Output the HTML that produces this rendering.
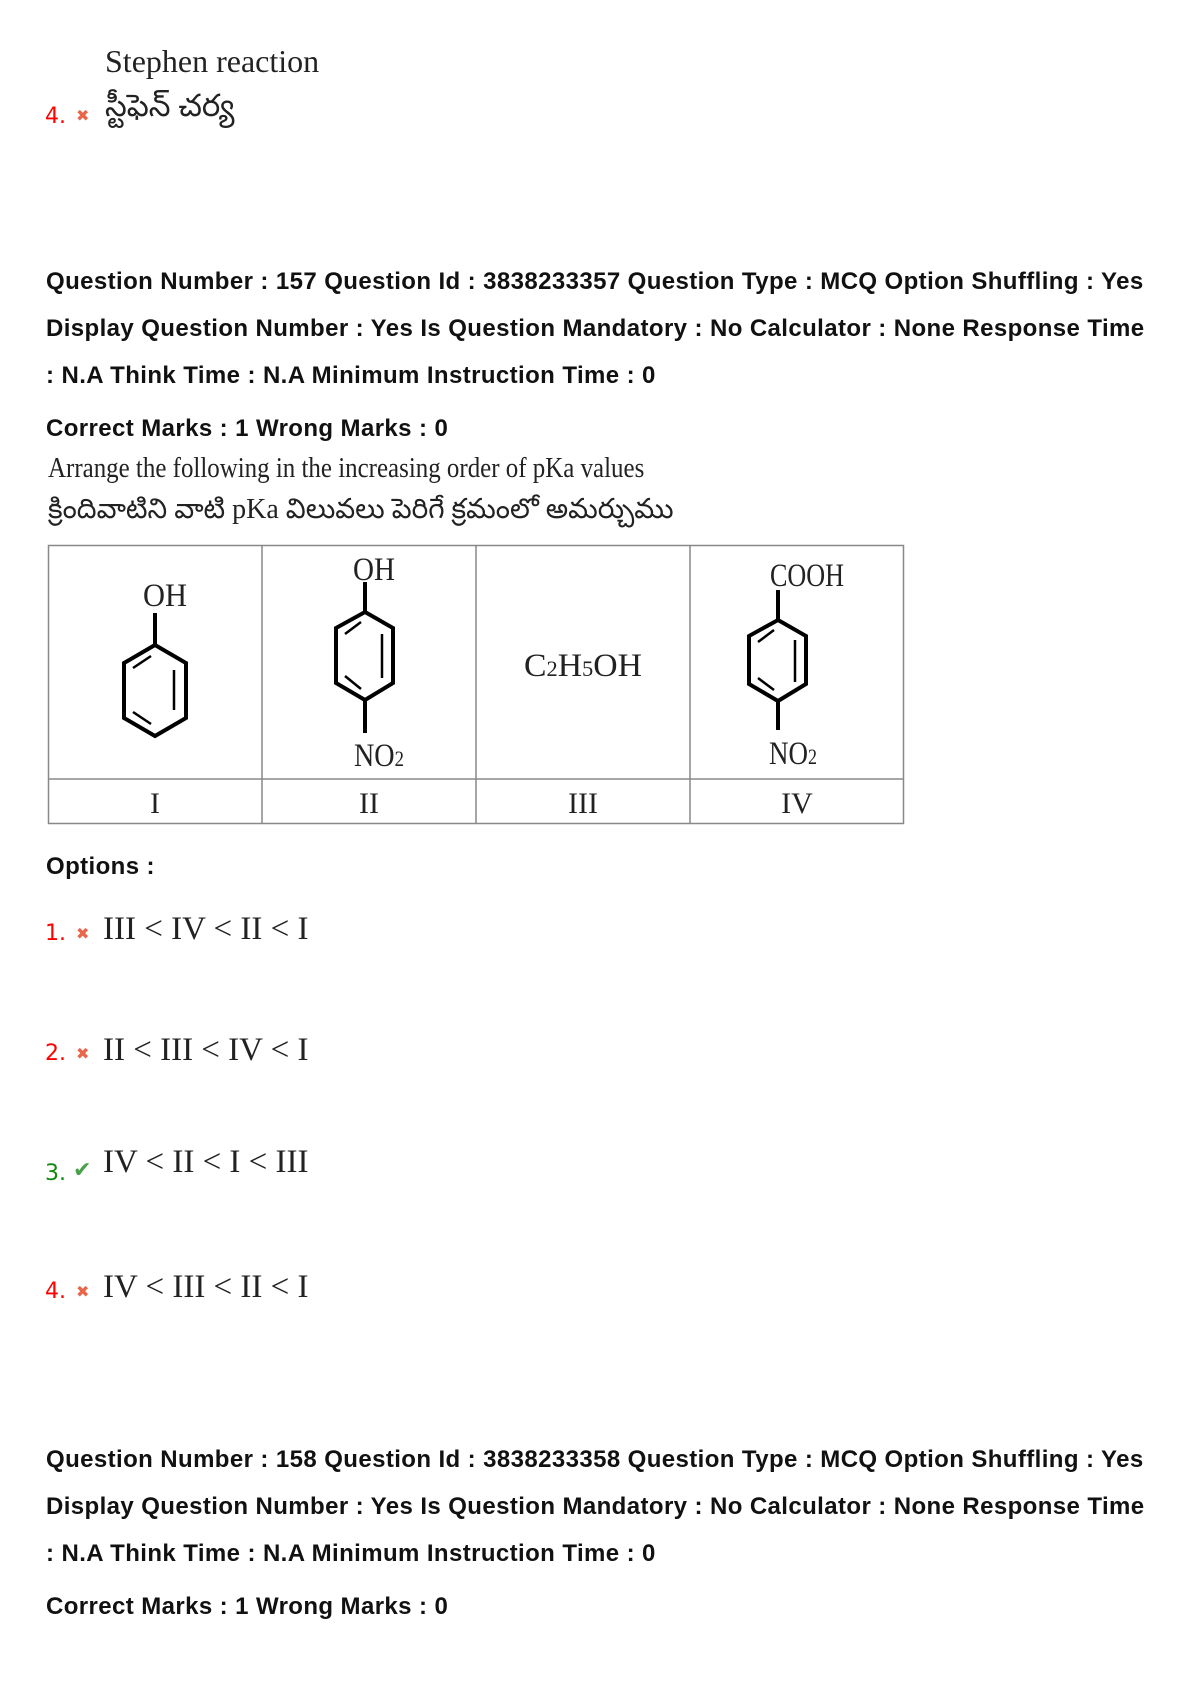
<!DOCTYPE html>
<html><head><meta charset="utf-8"><style>
html,body{margin:0;padding:0;background:#fff;width:1190px;height:1684px;overflow:hidden;position:relative}
.a{position:absolute;white-space:nowrap}
.h{font-family:"Liberation Sans",sans-serif;font-weight:bold;font-size:24px;letter-spacing:0.4px;color:#111;left:46px}
.s{font-family:"Liberation Serif",serif;color:#222}
.n{font-family:"DejaVu Sans","Liberation Sans",sans-serif;font-size:22px}
.r{color:#f00}.g{color:#118811}
.x{color:#e8664a;font-size:16px;font-family:"DejaVu Sans",sans-serif;font-weight:bold}
.c{color:#4aa04a;font-size:22px;font-family:"DejaVu Sans",sans-serif}
</style></head><body>
<div class="a s" style="left:105px;top:43px;font-size:32px">Stephen reaction</div>
<div class="a s" style="left:105px;top:88px;font-size:31px">స్టీఫెన్ చర్య</div>
<div class="a n r" style="left:45px;top:104px">4.</div>
<div class="a x" style="left:76px;top:106px">✖</div>

<div class="a h" style="top:268px">Question Number : 157 Question Id : 3838233357 Question Type : MCQ Option Shuffling : Yes</div>
<div class="a h" style="top:315px">Display Question Number : Yes Is Question Mandatory : No Calculator : None Response Time</div>
<div class="a h" style="top:362px">: N.A Think Time : N.A Minimum Instruction Time : 0</div>
<div class="a h" style="top:415px">Correct Marks : 1 Wrong Marks : 0</div>
<div class="a s" style="left:48px;top:452px;font-size:29px;transform:scaleX(0.86);transform-origin:left">Arrange the following in the increasing order of pKa values</div>
<div class="a s" style="left:48px;top:494px;font-size:28px">క్రిందివాటిని వాటి pKa విలువలు పెరిగే క్రమంలో అమర్చుము</div>

<svg class="a" style="left:0;top:0" width="1190" height="840">
<g fill="none" stroke="#888" stroke-width="1.5">
<rect x="48.5" y="545.5" width="855" height="278"/>
<line x1="48" y1="779" x2="904" y2="779"/>
<line x1="262" y1="545" x2="262" y2="823"/>
<line x1="476" y1="545" x2="476" y2="823"/>
<line x1="690" y1="545" x2="690" y2="823"/>
</g>
<g fill="none" stroke="#000" stroke-width="4">
<line x1="155" y1="613" x2="155" y2="645"/>
<polygon points="155,645 186,663 186,718 155,736 124,718 124,663"/>
<line x1="174" y1="670" x2="174" y2="710" stroke-width="2.5"/>
<line x1="133" y1="668" x2="151" y2="656" stroke-width="2.5"/>
<line x1="133" y1="712" x2="151" y2="724" stroke-width="2.5"/>
<line x1="365" y1="582" x2="365" y2="612"/>
<polygon points="365,612 393,628 393,683 365,700 336,683 336,628"/>
<line x1="382" y1="634" x2="382" y2="678" stroke-width="2.5"/>
<line x1="345" y1="676" x2="361" y2="689" stroke-width="2.5"/>
<line x1="345" y1="634" x2="361" y2="622" stroke-width="2.5"/>
<line x1="365" y1="700" x2="365" y2="733"/>
<line x1="778" y1="590" x2="778" y2="620"/>
<polygon points="778,620 806,636 806,684 778,701 749,684 749,636"/>
<line x1="795" y1="640" x2="795" y2="682" stroke-width="2.5"/>
<line x1="758" y1="678" x2="774" y2="690" stroke-width="2.5"/>
<line x1="758" y1="642" x2="774" y2="630" stroke-width="2.5"/>
<line x1="778" y1="701" x2="778" y2="730"/>
</g>
<g font-family="Liberation Serif,serif" font-size="33" fill="#222" text-anchor="middle">
<text x="165" y="606" textLength="44" lengthAdjust="spacingAndGlyphs">OH</text>
<text x="374" y="580" textLength="42" lengthAdjust="spacingAndGlyphs">OH</text>
<text x="379" y="766" textLength="50" lengthAdjust="spacingAndGlyphs">NO<tspan font-size="22">2</tspan></text>
<text x="583" y="676" textLength="118" lengthAdjust="spacingAndGlyphs">C<tspan font-size="22">2</tspan>H<tspan font-size="22">5</tspan>OH</text>
<text x="807" y="586" textLength="74" lengthAdjust="spacingAndGlyphs">COOH</text>
<text x="793" y="764" textLength="48" lengthAdjust="spacingAndGlyphs">NO<tspan font-size="22">2</tspan></text>
<text x="155" y="813" font-size="30">I</text>
<text x="369" y="813" font-size="30">II</text>
<text x="583" y="813" font-size="30">III</text>
<text x="797" y="813" font-size="30">IV</text>
</g>
</svg>

<div class="a h" style="top:853px">Options :</div>

<div class="a n r" style="left:45px;top:921px">1.</div>
<div class="a x" style="left:76px;top:924px">✖</div>
<div class="a s" style="left:103px;top:911px;font-size:33px">III &lt; IV &lt; II &lt; I</div>

<div class="a n r" style="left:45px;top:1041px">2.</div>
<div class="a x" style="left:76px;top:1044px">✖</div>
<div class="a s" style="left:103px;top:1032px;font-size:33px">II &lt; III &lt; IV &lt; I</div>

<div class="a n g" style="left:45px;top:1161px">3.</div>
<div class="a c" style="left:73px;top:1158px">✔</div>
<div class="a s" style="left:103px;top:1144px;font-size:33px">IV &lt; II &lt; I &lt; III</div>

<div class="a n r" style="left:45px;top:1279px">4.</div>
<div class="a x" style="left:76px;top:1282px">✖</div>
<div class="a s" style="left:103px;top:1269px;font-size:33px">IV &lt; III &lt; II &lt; I</div>

<div class="a h" style="top:1446px">Question Number : 158 Question Id : 3838233358 Question Type : MCQ Option Shuffling : Yes</div>
<div class="a h" style="top:1493px">Display Question Number : Yes Is Question Mandatory : No Calculator : None Response Time</div>
<div class="a h" style="top:1540px">: N.A Think Time : N.A Minimum Instruction Time : 0</div>
<div class="a h" style="top:1593px">Correct Marks : 1 Wrong Marks : 0</div>
</body></html>
